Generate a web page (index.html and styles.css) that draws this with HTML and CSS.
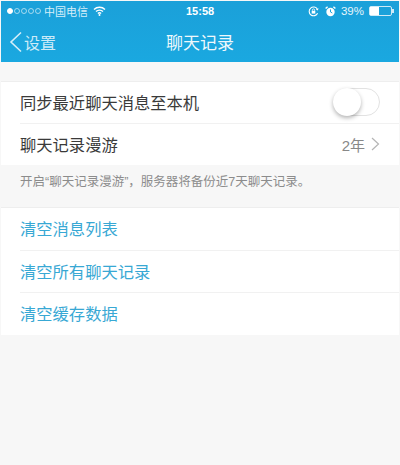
FILE: index.html
```html
<!DOCTYPE html>
<html lang="zh-CN">
<head>
  <meta charset="UTF-8" />
  <meta name="viewport" content="width=device-width, initial-scale=1.0"/>
  <title>聊天记录</title>
  <link rel="stylesheet" href="styles.css">
</head>
<body>
  <header class="top">
    <div class="status">
      <div class="status-left">
        <span class="dots">
          <i class="dot on"></i><i class="dot"></i><i class="dot"></i><i class="dot"></i><i class="dot"></i>
        </span>
        <span class="carrier">中国电信</span>
        <svg class="wifi" width="13" height="10" viewBox="0 0 13 10">
          <path d="M1 3.4a8 8 0 0 1 11 0M3 5.5a5.2 5.2 0 0 1 7 0M4.9 7.4a2.4 2.4 0 0 1 3.2 0" fill="none" stroke="#fff" stroke-width="1.4"/>
          <circle cx="6.5" cy="9" r="1" fill="#fff"/>
        </svg>
      </div>
      <div class="clock">15:58</div>
      <div class="status-right">
        <svg width="11" height="11" viewBox="0 0 11 11">
          <path d="M9.6 7.2A4.4 4.4 0 1 1 9.4 3.2" fill="none" stroke="#fff" stroke-width="1.1"/>
          <path d="M10.6 2.2 9.8 4.6 7.8 3.4z" fill="#fff"/>
          <rect x="3.7" y="4.8" width="3.6" height="2.8" fill="#fff"/>
          <path d="M4.4 4.8V4a1.1 1.1 0 0 1 2.2 0v.8" fill="none" stroke="#fff" stroke-width=".8"/>
        </svg>
        <svg class="alarm" width="11" height="11" viewBox="0 0 11 11">
          <circle cx="5.5" cy="6" r="4.2" fill="#fff"/>
          <path d="M5.5 3.4V6l1.8 1" fill="none" stroke="#1ba4dc" stroke-width="1"/>
          <path d="M.6 2.6 2.6.8M10.4 2.6 8.4.8" stroke="#fff" stroke-width="1.4"/>
        </svg>
        <span class="percent">39%</span>
        <span class="battery"><span class="battery-fill"></span></span>
        <span class="battery-tip"></span>
      </div>
    </div>
    <nav class="nav">
      <a class="back">
        <svg width="14" height="22" viewBox="0 0 14 22">
          <path d="M12 1.5 2 11l10 9.5" fill="none" stroke="#d5eef9" stroke-width="1.6"/>
        </svg>
        <span>设置</span>
      </a>
      <h1>聊天记录</h1>
    </nav>
  </header>

  <section class="group first">
    <div class="row">
      <span>同步最近聊天消息至本机</span>
      <span class="switch"><span class="knob"></span></span>
    </div>
    <div class="row">
      <span>聊天记录漫游</span>
      <span class="value">2年
        <svg width="9" height="14" viewBox="0 0 9 14">
          <path d="M1 1l6.5 6L1 13" fill="none" stroke="#b5b5b5" stroke-width="1.2"/>
        </svg>
      </span>
    </div>
  </section>

  <p class="note">开启“聊天记录漫游”，服务器将备份近7天聊天记录。</p>

  <section class="group">
    <div class="row link">清空消息列表</div>
    <div class="row link">清空所有聊天记录</div>
    <div class="row link">清空缓存数据</div>
  </section>
</body>
</html>
```

FILE: styles.css
```css
body {
  margin: 0;
  height: 465px;
  overflow: hidden;
  box-sizing: border-box;
  padding: 1px 1px 0 1px;
  background: #f7f7f7;
  font-family: "Liberation Sans", "Noto Sans CJK SC", sans-serif;
  color: #3a3a3a;
}

/* Header */
.top {
  height: 61px;
  background: linear-gradient(#1ba0d9, #1aa8e0);
  color: #fff;
}
.status {
  display: flex;
  justify-content: space-between;
  align-items: center;
  height: 20px;
  padding: 0 5px 0 6px;
  font-size: 11px;
  position: relative;
}
.status-left, .status-right {
  display: flex;
  align-items: center;
}
.dots {
  display: flex;
  gap: 1px;
  margin-right: 3px;
}
.dot {
  width: 4px;
  height: 4px;
  border: 1px solid #cfeaf6;
  border-radius: 50%;
  opacity: 0.75;
}
.dot.on {
  background: #fff;
  border-color: #fff;
  opacity: 1;
}
.carrier {
  color: #d5eef9;
}
.wifi {
  margin-left: 5px;
}
.clock {
  position: absolute;
  left: 185px;
  font-size: 11px;
  font-weight: bold;
}
.status-right {
  gap: 5px;
}
.alarm {
  margin-left: 1px;
}
.percent {
  font-size: 11.5px;
  color: #e6f5fb;
}
.battery {
  width: 21px;
  height: 8px;
  border: 1px solid #cfeaf6;
  border-radius: 2px;
  margin-right: -5px;
  display: flex;
}
.battery-fill {
  width: 9px;
  background: #fff;
}
.battery-tip {
  width: 2px;
  height: 4px;
  background: #cfeaf6;
}

.nav {
  position: relative;
  height: 41px;
  display: flex;
  align-items: center;
  justify-content: center;
}
.nav h1 {
  margin: 0;
  font-size: 17px;
  font-weight: normal;
  color: #eef8fc;
}
.back {
  position: absolute;
  left: 8px;
  top: 9px;
  display: flex;
  align-items: center;
  gap: 1px;
  font-size: 16px;
  color: #cdebf8;
}

/* Rows */
.group {
  background: #fff;
  border-top: 1px solid #eee;
}
.group.first {
  margin-top: 19px;
}
.row {
  height: 40px;
  margin-left: 19px;
  padding: 0 19px 1px 0;
  display: flex;
  justify-content: space-between;
  align-items: center;
  font-size: 16.3px;
  border-bottom: 1px solid #f1f1f1;
}
.row:last-child {
  border-bottom: 0;
}
.link {
  height: 40.5px;
  color: #38a8d4;
}
.value {
  display: flex;
  align-items: center;
  gap: 6px;
  font-size: 15px;
  color: #888;
}
.switch {
  width: 47px;
  height: 28px;
  box-sizing: border-box;
  border: 1px solid #e2e2e2;
  border-radius: 14px;
  display: flex;
}
.knob {
  width: 28px;
  height: 28px;
  margin: -1px 0 0 -1px;
  border-radius: 50%;
  background: #fff;
  box-shadow: 0 2px 4px rgba(0,0,0,0.3);
}

.note {
  margin: 0;
  height: 42px;
  padding-left: 19px;
  line-height: 34px;
  font-size: 12.5px;
  color: #8c8c8c;
}
```
